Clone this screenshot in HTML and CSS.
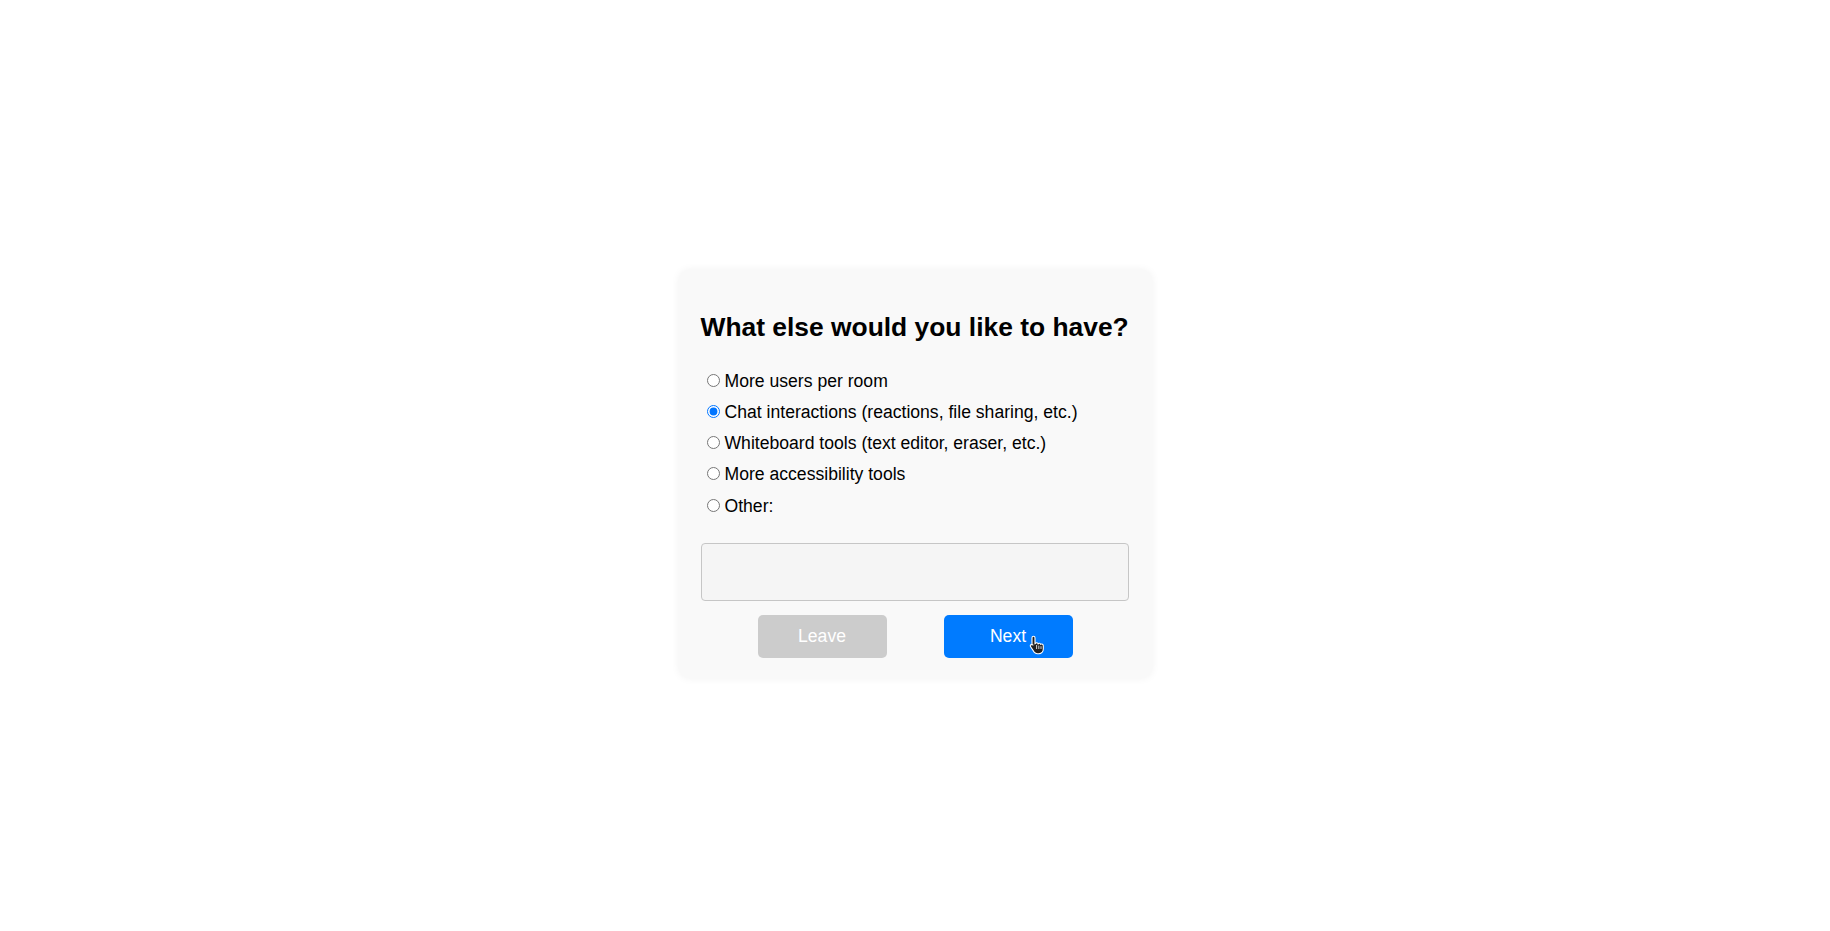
FILE: index.html
```html
<!DOCTYPE html>
<html>
<head>
<meta charset="utf-8">
<link rel="stylesheet" href="styles.css">
</head>
<body>
<div class="card">
  <h1 class="title">What else would you like to have?</h1>
  <div class="options">
    <label class="option"><input type="radio" name="f">More users per room</label>
    <label class="option"><input type="radio" name="f" checked>Chat interactions (reactions, file sharing, etc.)</label>
    <label class="option"><input type="radio" name="f">Whiteboard tools (text editor, eraser, etc.)</label>
    <label class="option"><input type="radio" name="f">More accessibility tools</label>
    <label class="option"><input type="radio" name="f">Other:</label>
  </div>
  <textarea class="other"></textarea>
  <div class="actions">
    <button class="btn btn-leave">Leave</button>
    <button class="btn btn-next">Next
      <svg class="cursor" width="16" height="20" viewBox="0 0 16 20">
        <path d="M4.5 1.2c.9 0 1.5.6 1.5 1.5v6l.3-.1c.3-.6.9-.9 1.6-.8.6.1 1 .5 1.2 1 .3-.4.8-.6 1.4-.5.6.1 1 .5 1.2 1 .3-.3.8-.4 1.3-.3.8.2 1.3.9 1.3 1.7v3.4c0 2.5-1.9 4.6-4.5 4.6H8.4c-1.3 0-2.4-.6-3.2-1.6L1.6 11.7c-.5-.7-.4-1.6.3-2.1.6-.4 1.4-.3 1.9.2l-.8.1V2.7c0-.9.6-1.5 1.5-1.5z" fill="#222" stroke="#fff" stroke-width="1.1"/>
        <path d="M7.6 10v4M9.8 10.6v3.4M12 11.2v2.8" stroke="#fff" stroke-width=".8"/>
      </svg>
    </button>
  </div>
</div>
</body>
</html>
```
FILE: styles.css
```css
body {
  margin: 8px;
  height: 100vh;
  display: flex;
  align-items: center;
  justify-content: center;
  background: #fff;
  font-family: "Liberation Sans", Arial, sans-serif;
}
.card {
  width: 429px;
  padding: 22px 22px 20px;
  background: #f9f9f9;
  border-radius: 10px;
  box-shadow: 0 0 8px rgba(0, 0, 0, 0.06);
}
.title {
  font-size: 26.4px;
  font-weight: bold;
  margin: 20px 0 20px;
  line-height: 30px;
  color: #000;
}
.options {
  display: flex;
  flex-direction: column;
  gap: 10.25px;
  padding-top: 9px;
}
.option {
  font-size: 17.6px;
  line-height: 21px;
  color: #000;
}
.option input {
  margin: 3px 5px 0 6px;
}
.other {
  display: block;
  box-sizing: border-box;
  width: 428px;
  height: 58px;
  margin-top: 26px;
  background: #f5f5f5;
  border: 1px solid #c6c6c6;
  border-radius: 4px;
  resize: none;
}
.actions {
  display: flex;
  justify-content: center;
  gap: 57px;
  margin-top: 14px;
}
.btn {
  position: relative;
  width: 129px;
  height: 43px;
  border: none;
  border-radius: 5px;
  color: #fff;
  font-family: "Liberation Sans", Arial, sans-serif;
  font-size: 17.6px;
}
.btn-leave {
  background: #ccc;
}
.btn-next {
  background: #007bff;
}
.cursor {
  position: absolute;
  left: 85px;
  top: 20px;
}
```
